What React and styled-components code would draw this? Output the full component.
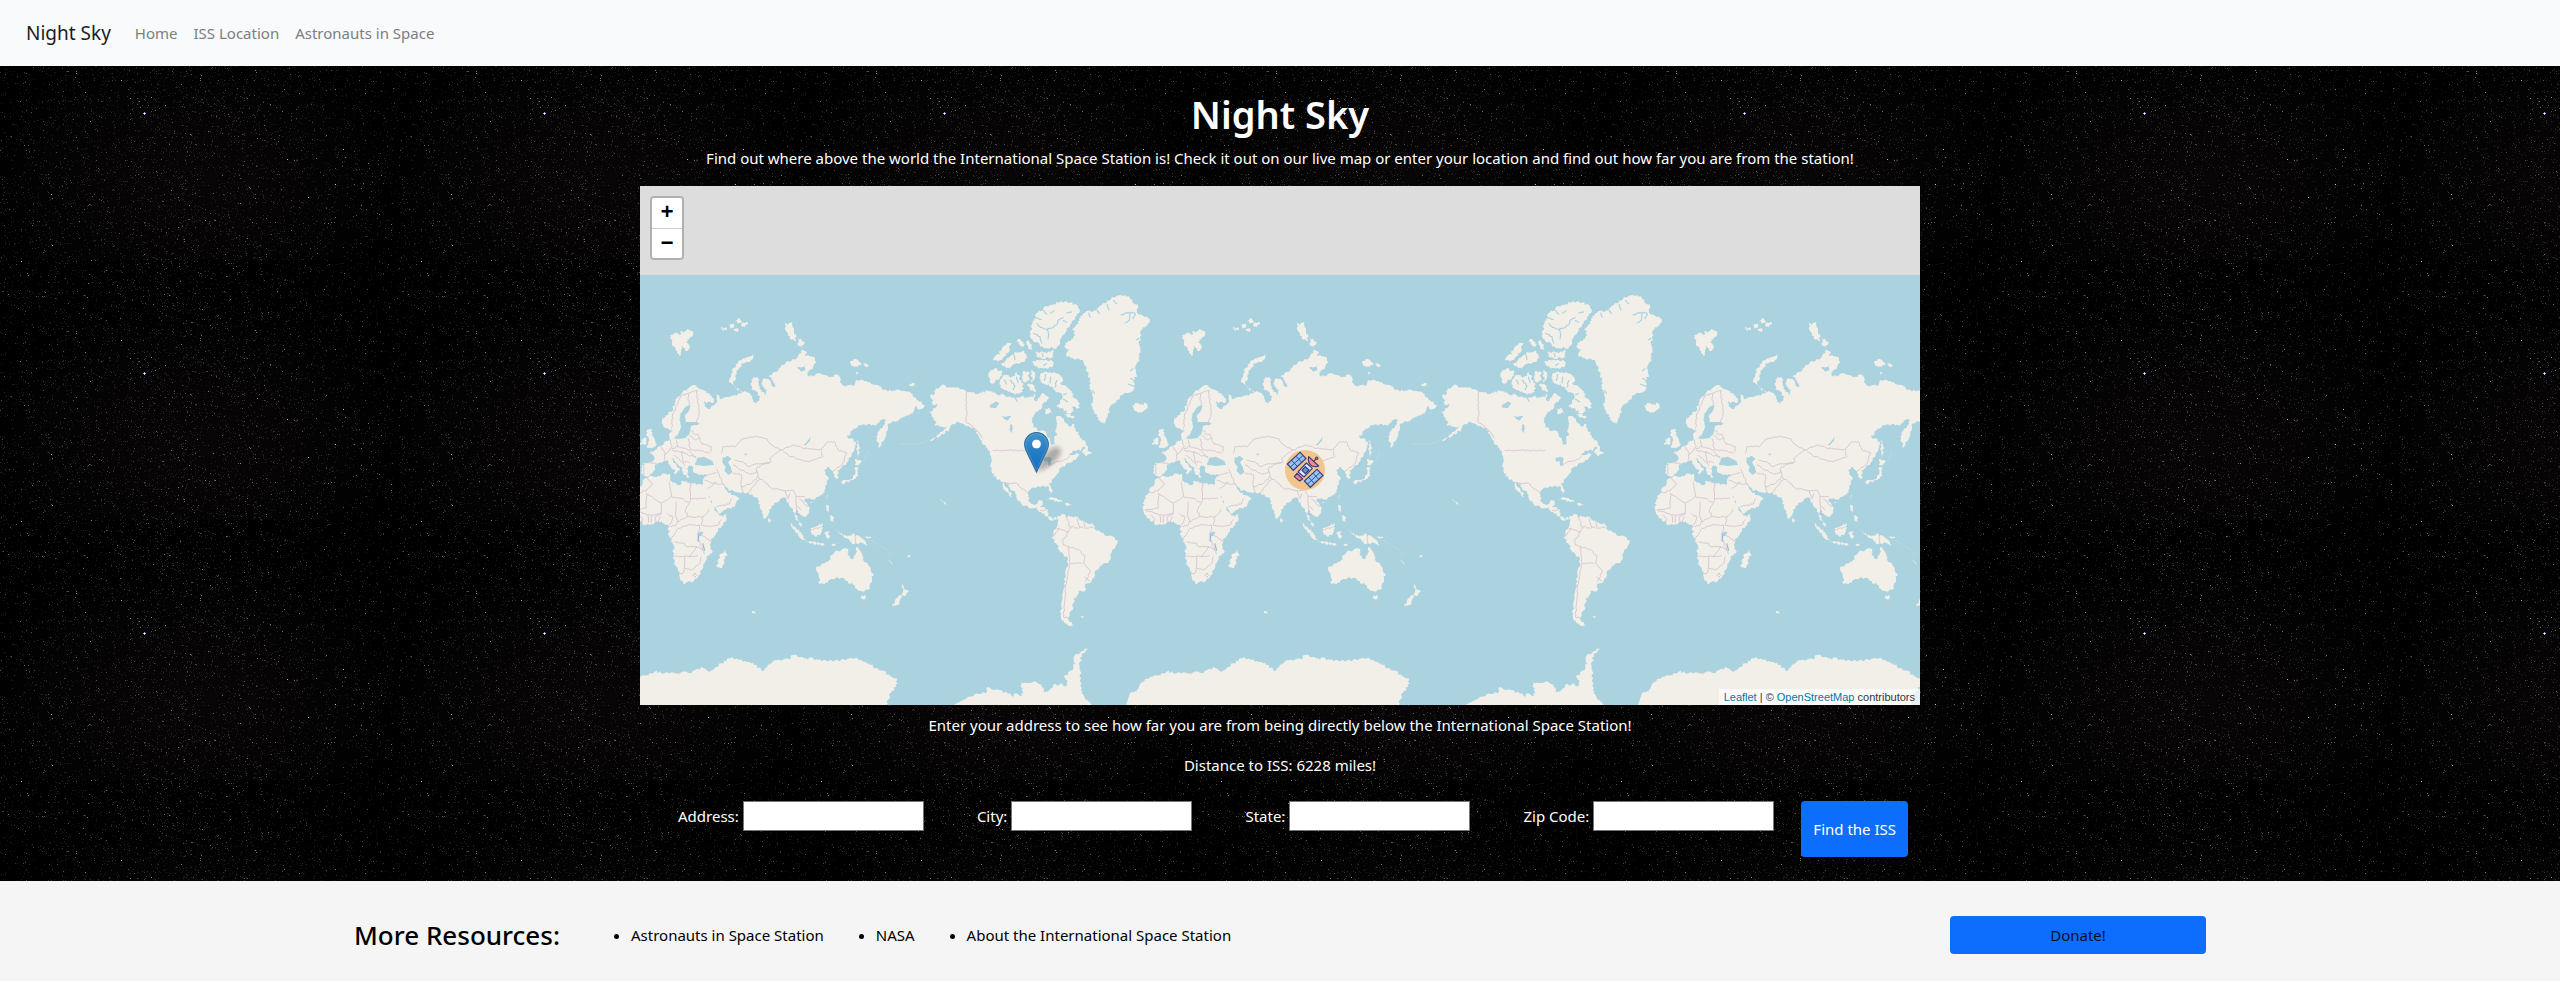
import React from "react";
import styled, { createGlobalStyle } from "styled-components";

/* ---------- deterministic randomness, for stars and coastlines ---------- */

function createRandom(seed) {
  let state = seed;
  return () => {
    state = (state * 1664525 + 1013904223) % 4294967296;
    return state / 4294967296;
  };
}

/* ---------- star field tile ---------- */

const TILE_WIDTH = 400;
const TILE_HEIGHT = 260;

function buildStarTile() {
  const random = createRandom(42);
  const layers = [
    { count: 4200, opacity: 0.09, fill: "#ffffff" },
    { count: 1500, opacity: 0.18, fill: "#f0f8f4" },
    { count: 420, opacity: 0.3, fill: "#ffffff" },
    { count: 90, opacity: 0.5, fill: "#dfe4f0" },
  ];
  const dust = layers
    .map(({ count, opacity, fill }) => {
      let d = "";
      let placed = 0;
      while (placed < count) {
        const x = Math.floor(random() * TILE_WIDTH);
        const y = Math.floor(random() * TILE_HEIGHT);
        const edge = Math.abs(x - 180) / 220;
        if (random() < edge * 0.6) continue;
        d += `M${x} ${y}h1v1h-1z`;
        placed += 1;
      }
      return `<path d="${d}" fill="${fill}" fill-opacity="${opacity}"/>`;
    })
    .join("");
  const blue = [[76, 73], [85, 92], [130, 98], [151, 97], [165, 105], [90, 121], [240, 203], [91, 0]];
  const white = [[287, 159], [52, 245], [51, 194], [21, 1], [308, 197], [343, 149], [121, 80], [335, 184]];
  const dots = [
    ...blue.map(([x, y]) => `<rect x="${x}" y="${y}" width="1" height="1" fill="#8080e0"/>`),
    ...white.map(([x, y]) => `<rect x="${x}" y="${y}" width="1" height="1" fill="#b9b9b9"/>`),
  ].join("");
  const svg =
    `<svg xmlns="http://www.w3.org/2000/svg" width="${TILE_WIDTH}" height="${TILE_HEIGHT}">` +
    `<defs><radialGradient id="g" cx=".48" cy=".7" r=".55"><stop offset="0" stop-color="#080506"/>` +
    `<stop offset=".7" stop-color="#040303"/><stop offset="1" stop-color="#000"/></radialGradient></defs>` +
    `<rect width="400" height="260" fill="url(#g)"/>${dust}${dots}` +
    `<path d="M143 113h3v1h-3zM144 112h1v3h-1z" fill="#a9a0f0"/><rect x="144" y="113" width="1" height="1" fill="#fff"/>` +
    `</svg>`;
  return `url("data:image/svg+xml,${encodeURIComponent(svg)}")`;
}

const starTile = buildStarTile();

/* ---------- world map data: one world is 1536 units wide ---------- */

const LAND = [
  // North America
  "90,347 105,340 100,332 118,322 135,315 150,322 175,322 199,333 225,341 245,338 262,332 280,338 295,345 310,343 325,350 345,355 362,350 380,352 395,350 405,340 402,355 410,365 420,350 432,340 445,350 440,365 430,370 425,385 412,395 402,405 397,420 400,437 412,450 430,452 440,462 450,480 455,495 465,492 463,475 470,460 466,450 472,430 468,412 480,408 492,415 498,430 510,440 523,432 530,455 545,475 558,490 562,500 545,508 525,512 510,520 520,525 530,518 540,524 520,540 505,548 497,555 485,560 478,572 470,585 455,600 448,615 455,628 459,640 452,638 447,625 440,618 425,618 410,622 395,624 385,632 384,650 388,665 398,673 412,672 418,660 430,658 428,668 420,680 435,685 445,690 445,705 455,715 468,712 470,720 458,722 445,715 432,700 415,692 402,685 385,682 365,672 350,655 345,640 330,622 318,608 312,612 325,630 337,650 333,652 318,635 308,618 302,603 288,595 275,575 271,560 274,530 270,515 258,502 245,485 235,468 225,450 205,437 190,432 175,425 160,432 148,448 130,462 105,475 90,482 110,468 130,452 140,440 125,440 105,438 110,425 95,410 88,395 105,385 112,372 92,375 100,362",
  // South America
  "470,715 480,708 490,702 497,708 510,710 530,710 545,722 560,728 580,735 590,752 605,758 625,768 645,773 653,785 645,800 635,815 632,835 620,850 600,858 590,870 585,885 572,908 555,912 558,925 550,935 535,935 533,948 520,955 525,965 515,975 518,990 508,1000 505,1012 510,1025 522,1035 508,1038 493,1028 483,1010 482,990 485,975 487,950 492,925 497,890 502,860 503,835 490,822 478,810 468,790 456,772 460,755 470,742 473,728",
  // Greenland
  "540,108 555,98 580,92 598,78 620,68 635,50 665,45 690,52 700,68 715,80 712,100 730,108 750,118 745,130 722,150 720,175 718,195 722,215 715,245 705,265 710,285 700,300 705,325 685,338 660,350 645,368 630,380 625,400 617,425 612,432 600,422 590,410 580,390 575,370 580,350 572,330 570,300 558,270 550,245 535,235 512,235 498,222 510,210 492,198 505,182 520,175 525,155 515,150 535,130",
  // Canadian Arctic
  "410,100 430,85 455,75 480,65 510,68 530,75 540,90 525,110 515,130 500,145 490,165 480,185 470,205 455,200 435,205 420,195 400,185 390,165 395,135 402,120",
  "408,214 430,218 462,212 460,232 430,236 412,232",
  "400,242 440,240 462,245 455,262 420,264 398,255",
  "278,240 300,212 320,190 335,190 325,218 300,240",
  "350,175 362,180 375,192 370,200 355,192",
  "386,180 394,192 398,208 384,206 380,194",
  "320,235 345,215 368,212 385,230 375,245 350,250 330,265 305,255",
  "270,270 290,265 308,276 300,290 285,305 272,310 265,290",
  "300,300 315,285 335,292 352,278 360,300 370,315 368,335 345,344 325,335 305,325 298,312",
  "368,275 386,276 388,300 375,308 366,290",
  "392,272 404,276 404,296 396,308",
  "382,312 400,315 408,335 392,332",
  "420,285 435,275 455,280 480,285 490,300 480,310 500,320 515,340 525,355 540,372 535,385 515,380 522,395 505,400 485,385 470,380 480,365 490,350 480,340 465,330 455,320 440,315 425,308 418,292",
  "432,385 450,385 456,398 440,403",
  "490,402 510,402 524,412 510,412",
  "550,508 560,495 563,512 575,522 560,528 545,518",
  // Caribbean
  "440,658 455,652 475,660 490,668 475,667 455,660",
  "490,670 505,669 516,674 500,678",
  // North Atlantic
  "697,378 705,370 720,375 738,370 743,383 725,398 705,393",
  "775,498 784,480 775,462 780,445 792,450 790,465 800,480 807,492 800,500 785,503",
  "758,495 760,480 770,472 775,485 770,495",
  "847,165 860,158 875,165 880,152 890,158 897,147 915,155 912,170 895,178 905,205 892,212 882,195 875,228 862,210 852,190",
  "997,145 1012,142 1016,150 1004,153",
  "1022,135 1036,130 1038,142 1026,146",
  "1042,120 1056,116 1060,128 1048,130",
  "1060,132 1076,126 1080,134 1066,140",
  "1036,148 1048,144 1050,156 1040,154",
  "1095,223 1090,240 1065,250 1050,270 1042,290 1035,310 1050,325 1065,338 1045,325 1022,305 1030,285 1035,265 1050,245 1075,232",
  "1190,128 1200,134 1212,126 1218,150 1225,170 1222,185 1205,175 1195,155",
  "1230,172 1250,190 1240,200 1230,197",
  "1385,245 1405,238 1420,250 1410,260 1390,258",
  "1425,250 1443,256 1436,262",
  "1403,275 1412,280 1404,285",
  "1563,315 1574,309 1580,314 1572,318",
  // Eurasia
  "822,420 835,405 850,395 860,370 870,350 885,335 905,322 925,317 945,330 965,345 978,360 972,370 945,366 955,382 966,388 978,376 988,365 985,345 995,350 1000,358 1015,350 1040,345 1060,340 1075,335 1088,345 1095,360 1105,372 1114,355 1110,340 1090,330 1088,310 1095,290 1108,290 1112,310 1120,330 1130,345 1137,330 1120,310 1130,295 1145,300 1150,315 1162,320 1145,285 1165,275 1180,255 1205,245 1230,230 1245,210 1255,215 1250,228 1275,230 1285,245 1275,265 1255,275 1265,290 1290,280 1330,290 1350,285 1360,310 1375,318 1400,315 1405,300 1425,300 1450,312 1480,320 1485,332 1520,332 1536,330 1566,335 1586,360 1611,375 1596,392 1581,378 1576,395 1564,405 1540,415 1520,425 1498,435 1495,455 1490,475 1475,503 1465,480 1470,455 1485,440 1500,410 1480,420 1465,435 1440,432 1410,438 1395,450 1378,472 1390,475 1402,485 1400,505 1390,530 1375,550 1358,565 1345,570 1352,590 1345,598 1335,580 1330,570 1318,560 1308,572 1320,590 1318,610 1310,635 1295,648 1275,658 1255,655 1250,665 1265,685 1262,700 1250,710 1235,700 1225,690 1222,700 1232,720 1242,740 1232,732 1220,710 1215,690 1205,680 1195,655 1180,655 1168,665 1150,680 1142,700 1133,717 1122,700 1115,680 1110,655 1095,648 1082,640 1060,638 1040,635 1020,628 1008,615 1015,630 1030,645 1045,648 1055,655 1040,680 1010,690 990,700 980,680 965,655 950,630 945,610 950,590 955,583 930,583 915,575 915,562 900,560 895,565 905,590 895,592 885,575 878,560 862,545 850,535 858,550 875,565 868,578 862,585 858,568 843,552 838,540 825,545 812,548 800,560 795,575 785,586 768,588 762,582 765,548 790,548 798,540 795,525 782,515 800,510 818,498 830,485 845,478 845,460 855,452 850,450 835,445 825,435",
  // Africa
  "775,592 800,590 835,582 848,585 845,600 860,608 875,615 885,602 905,608 930,612 950,612 955,630 965,655 978,675 985,695 995,708 1018,702 1015,720 990,750 972,775 968,800 972,820 955,832 950,850 940,870 930,890 915,905 885,910 875,890 865,860 855,830 858,795 845,770 840,745 842,735 825,730 810,725 790,732 770,735 750,720 735,705 730,690 732,660 745,640 755,620",
  "1012,808 1017,822 1008,845 1000,865 988,862 988,840 998,822",
  // South and East Asia
  "1142,712 1150,722 1145,728 1140,722",
  "1208,730 1225,745 1245,765 1253,782 1240,777 1222,755",
  "1252,782 1275,786 1300,790 1320,795 1300,797 1265,790",
  "1268,745 1290,738 1303,728 1305,745 1298,765 1280,768 1270,758",
  "1312,755 1328,750 1318,760 1325,775 1314,770",
  "1315,675 1322,678 1322,697 1315,692",
  "1325,708 1338,712 1338,725 1328,722",
  "1330,792 1345,790 1338,798",
  "1345,752 1360,765 1375,768 1400,762 1425,775 1440,795 1425,790 1405,790 1390,788 1375,775",
  "1430,772 1452,772 1440,778",
  "1315,648 1320,643 1318,655",
  "1265,668 1274,663 1271,670",
  "1357,608 1375,600 1392,598 1403,580 1402,562 1412,562 1410,578 1405,595 1385,603 1362,612",
  "1400,552 1405,535 1420,547 1408,556",
  "1408,478 1414,500 1415,520 1409,530 1405,505",
  // Oceania
  "1285,860 1305,850 1320,845 1332,825 1350,812 1362,808 1382,808 1378,822 1395,838 1403,825 1408,800 1415,810 1425,838 1440,850 1455,880 1452,900 1440,930 1418,932 1402,925 1392,908 1380,910 1370,897 1350,893 1325,900 1310,912 1295,912 1292,885",
  "1420,945 1433,945 1430,958 1424,958",
  "1540,910 1548,925 1562,932 1550,948 1543,948 1546,930",
  "1536,945 1542,952 1528,975 1512,978 1520,965",
  "1500,842 1514,850 1510,852",
  "1558,828 1570,822 1564,832",
  "1092,993 1102,995 1098,1000",
  "540,1012 552,1010 548,1015",
  "1656,658 1672,666 1676,671 1668,670",
  // Antarctica
  "160,1275 200,1255 235,1242 255,1240 262,1222 285,1230 330,1240 340,1252 345,1240 360,1248 370,1240 362,1205 385,1208 400,1205 425,1215 430,1235 450,1230 460,1215 480,1212 505,1218 500,1200 490,1192 520,1165 525,1125 565,1103 545,1125 540,1145 545,1240 575,1275 575,1300 160,1300",
  "678,1275 690,1240 710,1235 720,1212 750,1190 800,1175 830,1180 900,1178 945,1163 965,1178 985,1160 1030,1132 1055,1140 1095,1148 1120,1172 1160,1140 1205,1138 1212,1125 1245,1132 1290,1140 1340,1142 1400,1135 1430,1145 1470,1165 1505,1185 1528,1200 1525,1220 1505,1240 1497,1275 1497,1300 678,1300",
];

const INLAND_WATER = [
  "857,476 872,460 880,440 875,415 878,400 895,378 908,378 905,390 890,408 893,425 935,428 930,435 908,438 905,460 890,475",
  "922,548 930,532 945,530 958,535 975,545 978,555 955,558 935,556 922,556",
  "1003,535 1020,528 1030,535 1020,548 1028,560 1032,578 1020,585 1010,575 1012,558 1004,548",
  "268,378 285,365 298,370 288,384 275,384",
  "305,410 330,408 336,404 322,422",
  "332,432 338,440 334,460 328,448",
  "430,535 445,530 455,535 452,555 446,558 442,542 434,545",
  "1245,495 1258,484 1268,466 1266,482 1254,496",
  "1066,520 1078,520 1074,528",
  "928,760 938,754 946,756 940,768 930,768",
  "930,240 936,238 934,244",
  "1228,262 1248,262 1252,252 1252,270 1238,274",
];

/* fjords and straits, cut into the land as thin water lines */
const FJORDS = [
  "410,130 422,142 440,148 458,144 470,134", "402,112 425,118", "440,148 446,162 444,178",
  "470,134 476,120 490,112", "400,160 420,170 425,190", "450,100 462,92", "500,100 516,96",
  "662,104 680,98 706,100", "690,100 688,120 676,130", "706,100 700,118", "590,84 598,102",
  "620,72 628,90", "566,98 572,112", "700,300 690,296", "704,318 684,312", "718,175 708,180",
  "700,265 690,272", "575,330 584,340", "640,60 652,72", "330,300 345,318 340,330", "350,290 354,310",
  "312,300 320,314", "340,222 346,240", "430,90 440,104", "500,128 488,122", "345,352 352,366",
  "438,282 432,302", "452,290 450,310", "470,300 466,322", "488,356 504,366", "500,340 490,344",
  "290,215 300,222", "425,220 428,232", "440,250 430,258",
];

const BORDERS = [
  "199,333 199,428 215,437 240,460 248,475", "278,511 400,511", "445,556 465,548 500,538 512,520",
  "305,608 350,610 365,625 383,638", "775,592 795,612 775,632 750,640", "775,640 775,685 735,690",
  "775,640 820,670 850,650 845,605", "850,650 880,655 905,668", "907,610 907,655 955,655",
  "907,655 905,668 892,690 900,710 870,725 862,700 865,665", "820,670 820,700 800,712 805,730",
  "735,690 790,707 820,700", "752,705 765,718 760,730", "780,706 782,728", "792,708 790,728",
  "815,710 812,726", "838,700 855,712 845,735", "900,710 925,712 945,710 965,690",
  "945,712 940,735 960,740 990,735 1000,718", "870,725 865,735 845,740",
  "850,775 870,745 900,735 935,735 930,770 940,800 950,822", "860,785 890,790 895,800 925,800",
  "853,828 905,830 930,825", "905,830 925,800 945,812", "888,865 890,830",
  "870,880 885,880 890,865 910,870 935,850 940,830", "915,885 922,880 926,886 920,891 915,885",
  "940,765 970,785", "845,478 852,500 842,515 832,522", "866,478 870,500 850,508",
  "870,500 905,510", "900,475 908,510", "905,465 920,480 935,475", "910,510 940,512 965,520",
  "905,512 915,525 925,535", "852,512 880,515 900,525 925,532", "860,525 875,540 892,558",
  "880,515 885,545 905,548", "818,500 832,520 828,540", "768,552 768,585", "782,548 808,552",
  "850,445 855,400 880,345 900,340 930,330", "900,340 903,378", "925,332 930,370 935,400 925,428",
  "915,462 930,462 940,490 970,500 968,516", "905,452 918,456",
  "1000,520 1005,500 1045,498 1060,478 1100,470 1135,475 1150,495 1180,510",
  "1180,510 1215,495 1250,505 1300,510 1318,485 1340,485 1350,510 1375,518 1365,550 1350,562",
  "1180,510 1145,535 1150,545 1120,555 1105,565 1110,590 1135,610 1150,625 1190,632 1215,630 1225,650 1250,650",
  "1185,515 1210,530 1260,545 1305,530 1300,515", "1040,540 1065,545 1080,560 1105,552 1145,548",
  "1035,555 1060,570 1090,582 1110,575", "985,566 995,590 1010,620", "1035,580 1060,585 1060,620 1065,635",
  "1060,620 1090,610 1110,590", "1078,640 1095,620 1115,595", "955,585 985,578", "950,600 975,610 1005,612",
  "960,625 985,605", "985,680 1025,672 1030,655", "1190,632 1200,655 1205,640", "1222,650 1225,675 1240,690",
  "1235,655 1260,680", "1225,680 1228,705", "1270,750 1300,740", "1403,765 1403,790",
  "1350,562 1335,572", "500,708 510,740 535,745 550,740", "550,722 555,745 580,742", "530,715 540,742",
  "470,745 505,755 500,770 488,780 490,795 505,800", "510,740 505,755", "475,745 460,770",
  "505,800 535,808 555,830 550,850 570,870 565,890 555,905",
  "505,800 510,850 500,900 495,960 490,1010 508,1015", "513,850 545,850", "553,890 572,905",
  "402,690 412,680", "420,692 440,690",
];

const coastRandom = createRandom(7);

function parsePoints(text) {
  return text.split(" ").map((pair) => pair.split(",").map(Number));
}

function roughen(points, closed, amount) {
  const result = [];
  const last = closed ? points.length : points.length - 1;
  for (let i = 0; i < last; i += 1) {
    const [ax, ay] = points[i];
    const [bx, by] = points[(i + 1) % points.length];
    const length = Math.hypot(bx - ax, by - ay);
    result.push([ax, ay]);
    if (length < 5 || ay > 1270) continue;
    const steps = Math.max(2, Math.round(length / 5));
    for (let s = 1; s < steps; s += 1) {
      const t = s / steps;
      const shift = (coastRandom() - 0.5) * amount;
      result.push([
        ax + (bx - ax) * t - ((by - ay) / length) * shift,
        ay + (by - ay) * t + ((bx - ax) / length) * shift,
      ]);
    }
  }
  if (!closed) result.push(points[points.length - 1]);
  return result;
}

function toPath(list, closed, amount) {
  return list
    .map((text) => {
      const points = roughen(parsePoints(text), closed, amount);
      return `M${points.map(([x, y]) => `${x.toFixed(1)} ${y.toFixed(1)}`).join("L")}${closed ? "Z" : ""}`;
    })
    .join("");
}

const landPath = toPath(LAND, true, 8);
const waterPath = toPath(INLAND_WATER, true, 3);
const fjordPath = toPath(FJORDS, false, 4);
const borderPath = toPath(BORDERS, false, 4);

/* ---------- styles ---------- */

const GlobalStyle = createGlobalStyle`
  *, *::before, *::after { box-sizing: border-box; }
  body {
    margin: 0;
    background: #000 ${starTile} 0 0 repeat;
    color: #212529;
    font-family: "Noto Sans", "Open Sans", sans-serif;
    font-size: 15px;
    line-height: 24px;
  }
`;

const Navbar = styled.nav`
  display: flex;
  align-items: center;
  gap: 24px;
  min-height: 66px;
  padding: 0 26px;
  background: #f8fafc;
`;

const Brand = styled.a`
  color: #1b1d1f;
  font-size: 19px;
  text-decoration: none;
`;

const NavLinks = styled.ul`
  display: flex;
  gap: 16px;
  margin: 0;
  padding: 0;
  list-style: none;
`;

const NavLink = styled.a`
  color: #7c7e7f;
  text-decoration: none;
`;

const Main = styled.main`
  display: flex;
  flex-direction: column;
  align-items: center;
  padding: 24px 0;
  color: #fff;
  text-align: center;
`;

const Title = styled.h1`
  margin: 0 0 8px;
  font-size: 38px;
  font-weight: 600;
  line-height: 48px;
`;

const Text = styled.p`
  margin: 0 0 16px;
`;

const MapFrame = styled.section`
  position: relative;
  width: 50%;
  height: 519px;
  margin-bottom: 8px;
  overflow: hidden;
  background: #ddd;
`;

const MapCanvas = styled.svg`
  display: block;
  width: 100%;
  height: 100%;
`;

const ZoomControl = styled.div`
  position: absolute;
  top: 10px;
  left: 10px;
  display: flex;
  flex-direction: column;
  border: 2px solid rgba(0, 0, 0, 0.2);
  border-radius: 4px;
  background-clip: padding-box;
`;

const ZoomButton = styled.button`
  width: 30px;
  height: 30px;
  padding: 2px 0 0;
  border: 0;
  border-radius: ${({ $edge }) => ($edge === "top" ? "2px 2px 0 0" : "0 0 2px 2px")};
  background: #fff;
  color: #000;
  font: bold 22px/28px "Liberation Mono", monospace;

  & + & {
    border-top: 1px solid #ccc;
  }
`;

const Attribution = styled.div`
  position: absolute;
  right: 0;
  bottom: 0;
  padding: 0 5px;
  background: rgba(255, 255, 255, 0.7);
  color: #333;
  font: 11px/16px "Liberation Sans", Arial, sans-serif;
`;

const AttributionLink = styled.a`
  color: #0078a8;
  text-decoration: none;
`;

const AddressForm = styled.form`
  display: flex;
  align-items: flex-start;
  gap: 27px;
  width: 50%;
  margin-top: 8px;
  padding: 0 12px 0 38px;
`;

const Fields = styled.div`
  display: flex;
  flex: 1;
  justify-content: space-between;
`;

const Field = styled.div`
  display: flex;
  align-items: center;
  gap: 4px;
`;

const TextInput = styled.input`
  width: 181px;
  height: 30px;
  padding: 1px 2px;
  border: 1px solid #767676;
  border-radius: 0;
  background: #fff;
  font: inherit;
`;

const PrimaryButton = styled.button`
  padding: ${({ $tall }) => ($tall ? "16px 12px" : "7px 12px")};
  width: ${({ $wide }) => ($wide ? "256px" : "auto")};
  border: 0;
  border-radius: 4px;
  background: #0d6efd;
  color: ${({ $dark }) => ($dark ? "#06101f" : "#fff")};
  font: inherit;
  white-space: nowrap;
`;

const Footer = styled.footer`
  min-height: 100px;
  display: flex;
  align-items: center;
  padding: 8px 24px 0;
  background: #f5f5f5;
  color: #000;
`;

const FooterContent = styled.div`
  display: flex;
  align-items: center;
  width: 100%;
  max-width: 1852px;
  margin: 0 auto;
`;

const FooterHeading = styled.h2`
  margin: 0 39px 0 0;
  font-size: 26px;
  font-weight: 500;
  line-height: 32px;
`;

const ResourceList = styled.ul`
  display: flex;
  flex: 1;
  gap: 52px;
  margin: 0;
  padding: 0 0 0 32px;
`;

const ResourceLink = styled.a`
  color: inherit;
  text-decoration: none;
`;

/* ---------- map pieces ---------- */

function World() {
  return (
    <g id="world">
      <path d={landPath} fill="#f2efe9" />
      <path d={fjordPath} fill="none" stroke="#aad3df" strokeWidth="3.5" />
      <path d={waterPath} fill="#aad3df" />
      <path d={borderPath} fill="none" stroke="#c9b0c6" strokeOpacity="0.75" strokeWidth="2.5" />
      <path d="M932 766L930 785M944 790L950 812" fill="none" stroke="#8fc1dc" strokeWidth="4" />
      <path d="M0 492Q60 496 92 478M1440 516Q1430 540 1422 545M1450 782Q1490 800 1512 826" fill="none" stroke="#d9e2df" strokeWidth="2" strokeDasharray="5 5" />
    </g>
  );
}

function LocationPin() {
  return (
    <g transform="translate(384 246)">
      <path d="M13 40Q18 22 28 16Q37 13 37 20Q33 32 13 40Z" fill="#222" fillOpacity="0.32" filter="url(#pin-shadow)" />
      <path
        d="M12.5 .6C5.8 .6 .6 5.8 .6 12.5c0 3.1 1.2 5.8 2.5 8.3L12.5 40l9.4-19.2c1.3-2.5 2.5-5.2 2.5-8.3C24.400 5.800 19.200 .6 12.5 .6Z"
        fill="url(#pin-blue)"
        stroke="#2e6c97"
        strokeWidth="1.1"
      />
      <path
        d="M12.5 1.700C6.500 1.700 1.700 6.500 1.700 12.5c0 2.900 1.100 5.400 2.400 7.900l8.400 17.2 8.400-17.2c1.300-2.500 2.400-5 2.400-7.900C23.300 6.500 18.500 1.700 12.500 1.700Z"
        fill="none"
        stroke="#fff"
        strokeOpacity="0.15"
      />
      <circle cx="12.500" cy="12" r="4.600" fill="#fff" stroke="#2e6c97" strokeOpacity="0.5" strokeWidth="0.6" />
    </g>
  );
}

function SolarPanel({ x, y }) {
  return (
    <g transform={`translate(${x} ${y}) rotate(-43)`} stroke="#3a3a78" strokeWidth="3.5">
      <rect x="-26" y="-13" width="52" height="26" fill="#8fc4f5" />
      <path d="M-9 -13V13M9 -13V13M-26 0H26" fill="none" strokeWidth="2.5" />
    </g>
  );
}

function StationMarker() {
  return (
    <g>
      <circle cx="1215" cy="570" r="60" fill="#f1c58c" />
      <SolarPanel x={1190} y={544} />
      <SolarPanel x={1241} y={595} />
      <g stroke="#3a3a78" strokeWidth="3.5" strokeLinejoin="round">
        <path d="M1183 590L1191 580L1208 597L1199 603Z" fill="#fb7f90" />
        <path d="M1194 576L1219 549L1237 565L1212 591Z" fill="#d9ecfc" />
        <path d="M1206 571L1216 560L1227 570L1216 581Z" fill="#5c92e6" />
        <path d="M1226 530Q1222 552 1237 558Q1250 562 1256 558Z" fill="#fb8796" />
        <path d="M1240 545L1249 536" fill="none" />
        <circle cx="1250" cy="535" r="4" fill="#d9606f" strokeWidth="3" />
      </g>
    </g>
  );
}

function WorldMap() {
  return (
    <MapFrame aria-label="ISS map">
      <MapCanvas viewBox="0 0 1280 519" preserveAspectRatio="xMidYMid slice" aria-hidden="true">
        <defs>
          <linearGradient id="pin-blue" x1="0" y1="0" x2="0" y2="1">
            <stop offset="0" stopColor="#4395cf" />
            <stop offset="0.500" stopColor="#257bc4" />
            <stop offset="1" stopColor="#126fc6" />
          </linearGradient>
          <filter id="pin-shadow" x="-50%" y="-50%" width="200%" height="200%">
            <feGaussianBlur stdDeviation="2" />
          </filter>
        </defs>
        <rect y="89" width="1280" height="430" fill="#aad3df" />
        <g transform="translate(260 94) scale(0.333333)">
          <World />
          <use href="#world" x="-1536" />
          <use href="#world" x="1536" />
          <StationMarker />
        </g>
        <LocationPin />
      </MapCanvas>
      <ZoomControl>
        <ZoomButton type="button" $edge="top" aria-label="Zoom in">+</ZoomButton>
        <ZoomButton type="button" $edge="bottom" aria-label="Zoom out">−</ZoomButton>
      </ZoomControl>
      <Attribution>
        <AttributionLink href="#leaflet">Leaflet</AttributionLink> | ©{" "}
        <AttributionLink href="#osm">OpenStreetMap</AttributionLink> contributors
      </Attribution>
    </MapFrame>
  );
}

/* ---------- page ---------- */

const FIELDS = [
  { id: "address", label: "Address:" },
  { id: "city", label: "City:" },
  { id: "state", label: "State:" },
  { id: "zip", label: "Zip Code:" },
];

const RESOURCES = ["Astronauts in Space Station", "NASA", "About the International Space Station"];

export default function App() {
  return (
    <>
      <GlobalStyle />
      <Navbar>
        <Brand href="#home">Night Sky</Brand>
        <NavLinks>
          <li><NavLink href="#home">Home</NavLink></li>
          <li><NavLink href="#location">ISS Location</NavLink></li>
          <li><NavLink href="#astronauts">Astronauts in Space</NavLink></li>
        </NavLinks>
      </Navbar>
      <Main>
        <Title>Night Sky</Title>
        <Text>
          Find out where above the world the International Space Station is! Check it out on our live map or enter
          your location and find out how far you are from the station!
        </Text>
        <WorldMap />
        <Text>Enter your address to see how far you are from being directly below the International Space Station!</Text>
        <Text>Distance to ISS: 6228 miles!</Text>
        <AddressForm onSubmit={(event) => event.preventDefault()}>
          <Fields>
            {FIELDS.map(({ id, label }) => (
              <Field key={id}>
                <label htmlFor={id}>{label}</label>
                <TextInput id={id} name={id} type="text" />
              </Field>
            ))}
          </Fields>
          <PrimaryButton type="submit" $tall>Find the ISS</PrimaryButton>
        </AddressForm>
      </Main>
      <Footer>
        <FooterContent>
          <FooterHeading>More Resources:</FooterHeading>
          <ResourceList>
            {RESOURCES.map((name) => (
              <li key={name}><ResourceLink href="#resources">{name}</ResourceLink></li>
            ))}
          </ResourceList>
          <PrimaryButton type="button" $wide $dark>Donate!</PrimaryButton>
        </FooterContent>
      </Footer>
    </>
  );
}
